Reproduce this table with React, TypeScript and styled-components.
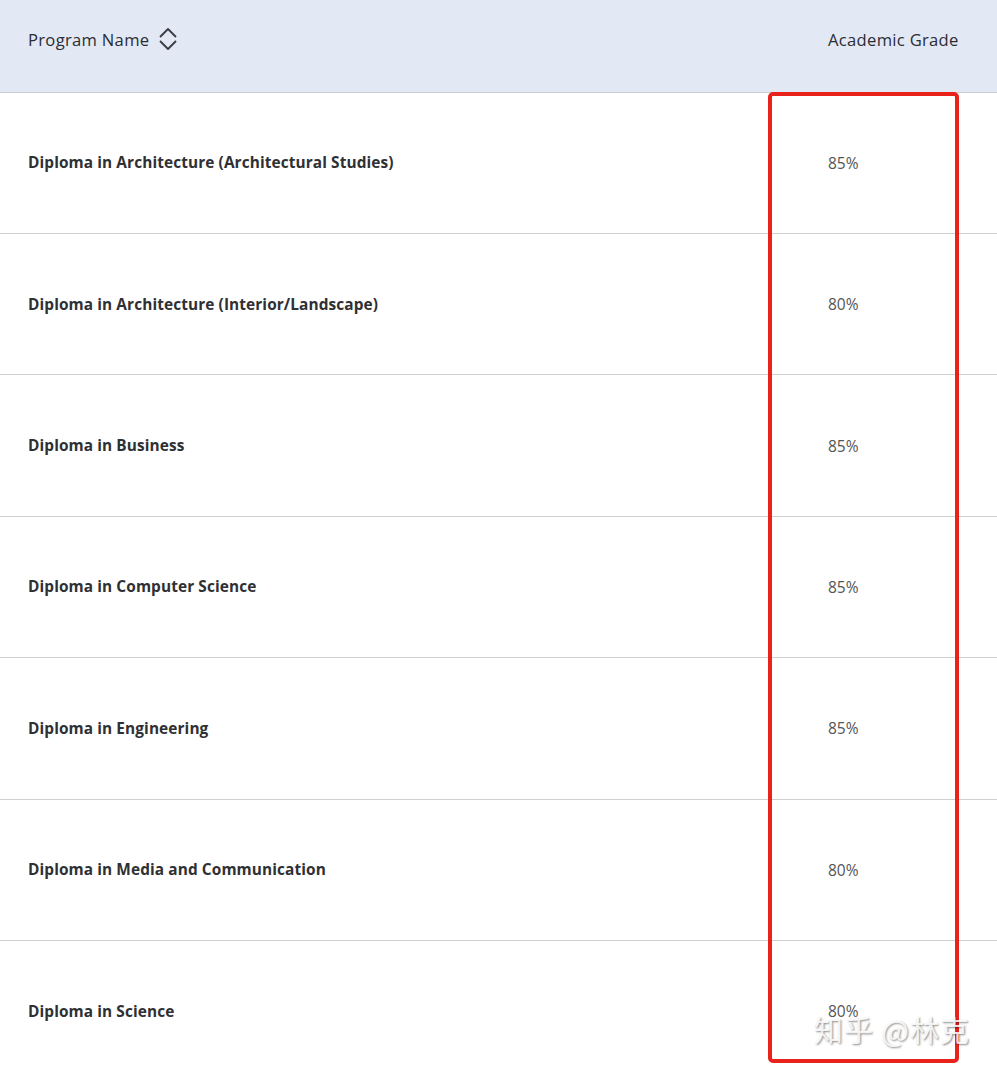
import styled, { createGlobalStyle } from 'styled-components';

const GlobalStyle = createGlobalStyle`
  html, body {
    margin: 0;
    padding: 0;
    background: #ffffff;
    overflow: hidden;
  }
  body {
    font-family: "Open Sans", "Liberation Sans", sans-serif;
  }
`;

const Page = styled.div`
  position: relative;
  width: 997px;
  height: 1071px;
  overflow: hidden;
`;

const Table = styled.div`
  display: flex;
  flex-direction: column;
`;

const HeaderRow = styled.div`
  display: grid;
  grid-template-columns: 1fr 134px;
  align-items: start;
  box-sizing: border-box;
  height: 92.6px;
  padding: 26px 35px 0 28px;
  background: #e3e8f5;
  border-bottom: 1px solid #c9ccd2;
  color: #2b2d33;
  font-size: 16.6px;
  letter-spacing: 0.3px;
`;

const HeaderCell = styled.div`
  display: flex;
  align-items: center;
  gap: 9px;
  height: 26px;
  white-space: nowrap;
`;

const Row = styled.div`
  display: grid;
  grid-template-columns: 1fr 134px;
  align-items: center;
  box-sizing: border-box;
  height: 141.4px;
  padding-left: 28px;
  padding-right: 35px;
  border-bottom: 1px solid #cfcfcf;
`;

const Name = styled.div`
  font-weight: 700;
  font-size: 15.4px;
  letter-spacing: 0.1px;
  color: #2f3033;
`;

const Grade = styled.div`
  font-size: 15.5px;
  color: #555;
`;

const Highlight = styled.div`
  position: absolute;
  left: 768px;
  top: 92px;
  width: 183px;
  height: 963px;
  border: 4px solid #e8231c;
  border-radius: 5px;
  pointer-events: none;
`;

const Watermark = styled.div`
  position: absolute;
  left: 814px;
  top: 1008px;
  font-family: "Noto Sans CJK SC", sans-serif;
  font-size: 29px;
  color: rgba(255, 255, 255, 0.85);
  text-shadow: 1px 1px 2px rgba(0, 0, 0, 0.45);
  letter-spacing: 1px;
`;

function SortIcon() {
  return (
    <svg width="20" height="24" viewBox="0 0 20 24" fill="none" stroke="#3a3c42" strokeWidth="1.8" strokeLinejoin="round">
      <path d="M2 10 L10 2 L18 10" />
      <path d="M2 14 L10 22 L18 14" />
    </svg>
  );
}

const programs = [
  { name: 'Diploma in Architecture (Architectural Studies)', grade: '85%' },
  { name: 'Diploma in Architecture (Interior/Landscape)', grade: '80%' },
  { name: 'Diploma in Business', grade: '85%' },
  { name: 'Diploma in Computer Science', grade: '85%' },
  { name: 'Diploma in Engineering', grade: '85%' },
  { name: 'Diploma in Media and Communication', grade: '80%' },
  { name: 'Diploma in Science', grade: '80%' },
];

export default function App() {
  return (
    <Page>
      <GlobalStyle />
      <Table>
        <HeaderRow>
          <HeaderCell>
            Program Name <SortIcon />
          </HeaderCell>
          <HeaderCell>Academic Grade</HeaderCell>
        </HeaderRow>
        {programs.map((p) => (
          <Row key={p.name}>
            <Name>{p.name}</Name>
            <Grade>{p.grade}</Grade>
          </Row>
        ))}
      </Table>
      <Highlight />
      <Watermark>知乎 @林克</Watermark>
    </Page>
  );
}
